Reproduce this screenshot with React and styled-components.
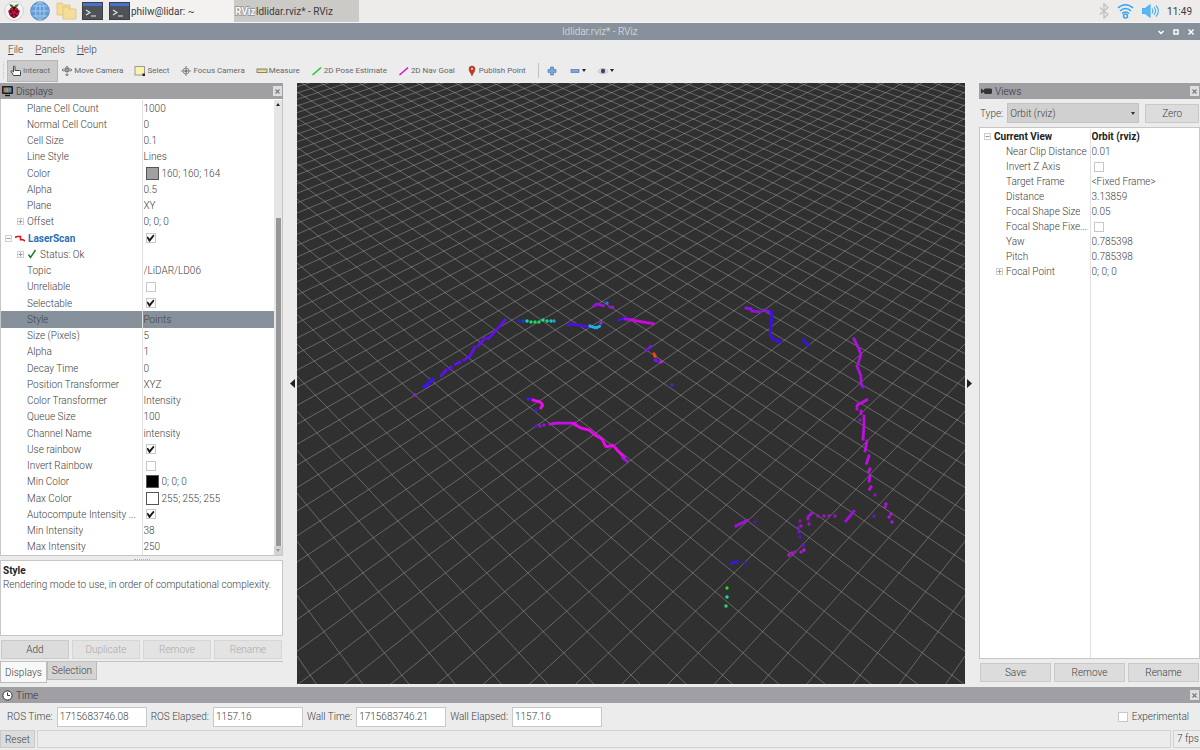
import React, { useState } from 'react';
import styled, { createGlobalStyle } from 'styled-components';

const GlobalStyle = createGlobalStyle`
  * {
    box-sizing: border-box;
  }

  body {
    margin: 0;
    background-color: #ececec;
    color: #404040;
    font-family: Roboto, "Liberation Sans", sans-serif;
    font-size: 10px;
    font-weight: 300;
    line-height: 15px;
  }

  button, input, select {
    font: inherit;
    color: inherit;
  }
`;

const Desktop = styled.div`
  display: flex;
  flex-direction: column;
  height: 100vh;
  overflow: hidden;
`;

/* ---------- desktop panel ---------- */

const Taskbar = styled.header`
  display: flex;
  align-items: center;
  height: 23px;
  padding: 0 8px 0 3px;
  background-color: #edecea;
  border-bottom: 1px solid #f6f6f6;
  font-weight: 400;
  color: #3c3c3c;
`;

const Launchers = styled.div`
  display: flex;
  align-items: center;
  gap: 4px;
  margin-right: 6px;
`;

const LauncherButton = styled.button`
  display: flex;
  align-items: center;
  justify-content: center;
  width: 22px;
  padding: 0;
  border: none;
  background: none;
`;

const TaskButton = styled.button`
  display: flex;
  align-items: center;
  gap: 1px;
  width: 125px;
  height: 22px;
  padding: 0;
  border: none;
  text-align: left;
  background-color: ${({ $active }) => ($active ? '#cbcac7' : '#f3f2f1')};
`;

const Tray = styled.div`
  display: flex;
  align-items: center;
  gap: 8px;
  margin-left: auto;
`;

/* ---------- window chrome ---------- */

const TitleBar = styled.div`
  display: grid;
  grid-template-columns: 1fr auto 1fr;
  align-items: center;
  height: 17px;
  padding: 0 4px;
  background-color: #87919b;
  color: #e2e5e8;
`;

const WindowTitle = styled.h1`
  grid-column: 2;
  margin: 0;
  font-size: 10px;
  font-weight: 300;
`;

const WindowControls = styled.div`
  display: flex;
  justify-content: flex-end;
  gap: 5px;
`;

const WindowButton = styled.button`
  display: flex;
  padding: 0;
  border: none;
  background: none;
`;

const MenuBar = styled.nav`
  display: flex;
  align-items: center;
  gap: 12px;
  height: 18px;
  padding: 0 8px;
`;

const MenuItem = styled.a`
  color: inherit;
  text-decoration: none;
`;

const ToolBar = styled.div`
  display: flex;
  align-items: center;
  height: 25px;
  padding-left: 3px;
  font-size: 8px;
  font-weight: 400;
  color: #666;
`;

const ToolHandle = styled.span`
  width: 4px;
  height: 17px;
  border-left: 1px dotted #c4c4c4;
`;

const ToolButton = styled.button`
  display: flex;
  align-items: center;
  gap: 1px;
  height: 22px;
  padding: 0 7px 0 2px;
  border: 1px solid ${({ $active }) => ($active ? '#b6b6b6' : 'transparent')};
  background-color: ${({ $active }) => ($active ? '#cacaca' : 'transparent')};
  white-space: nowrap;
`;

const ToolDivider = styled.span`
  width: 1px;
  height: 15px;
  margin: 0 4px;
  background-color: #c2c2c2;
`;

/* ---------- docks ---------- */

const Workspace = styled.main`
  display: grid;
  grid-template-columns: 283px 14px minmax(0, 1fr) 14px 221px;
  grid-template-rows: minmax(0, 1fr);
  flex: 1;
  min-height: 0;
`;

const Dock = styled.section`
  display: flex;
  flex-direction: column;
  min-width: 0;
  min-height: 0;
`;

const DockHeader = styled.div`
  display: flex;
  align-items: center;
  gap: 3px;
  flex: none;
  height: 16px;
  padding: 0 1px 0 2px;
  background-color: #9f9fa4;
`;

const DockTitle = styled.h2`
  flex: 1;
  margin: 0;
  font-size: 10px;
  font-weight: 300;
  color: #333;
`;

const CloseButton = styled.button`
  display: flex;
  align-items: center;
  justify-content: center;
  width: 9px;
  height: 10px;
  padding: 0;
  border: none;
  background-color: #dedede;
`;

const CollapseHandle = styled.button`
  display: flex;
  align-items: center;
  justify-content: ${({ $side }) => ($side === 'left' ? 'flex-end' : 'flex-start')};
  padding: 0 2px;
  border: none;
  background: none;
`;

const TreeFrame = styled.div`
  display: flex;
  flex: 1;
  min-height: 0;
  padding-top: 1px;
  border: 1px solid #c6c6c6;
  border-top: ${({ $flush }) => ($flush ? 'none' : '1px solid #c6c6c6')};
  background-color: #fff;
`;

const Tree = styled.table`
  flex: 1;
  width: 100%;
  height: 100%;
  border-collapse: collapse;
  table-layout: fixed;
`;

const TreeRow = styled.tr`
  height: ${({ $height }) => $height};
  background-color: ${({ $selected }) => ($selected ? '#87919b' : 'transparent')};
`;

const NameCell = styled.td`
  width: ${({ $width }) => $width}px;
  padding: 0 0 0 ${({ $indent }) => $indent}px;
  border-right: 1px solid #e0e0e0;
  vertical-align: middle;
`;

const ValueCell = styled.td`
  padding: 0 0 0 1px;
  vertical-align: middle;
`;

const CellLine = styled.div`
  display: flex;
  align-items: center;
  gap: 3px;
  height: 15px;
  font-weight: ${({ $bold }) => ($bold ? 700 : 300)};
  color: ${({ $color }) => $color || 'inherit'};
`;

const CellText = styled.span`
  overflow: hidden;
  white-space: nowrap;
  text-overflow: ellipsis;
`;

const Expander = styled.button`
  display: flex;
  flex: none;
  align-items: center;
  justify-content: center;
  width: 7px;
  height: 7px;
  padding: 0;
  border: 1px solid #cfcfcf;
  background-color: #fbfbfb;
`;

const CheckBox = styled.input`
  appearance: none;
  flex: none;
  width: 10px;
  height: 10px;
  margin: 0 0 0 2px;
  border: 1px solid #c8c8c8;
  background-color: #fff;

  &:checked::after {
    content: "";
    display: block;
    width: 8px;
    height: 8px;
    background-color: #1c1c1c;
    clip-path: polygon(0 40%, 18% 30%, 38% 58%, 85% 4%, 100% 20%, 42% 94%, 32% 94%);
  }
`;

const Swatch = styled.span`
  flex: none;
  width: 13px;
  height: 13px;
  margin-left: 2px;
  border: 1px solid #555;
  background-color: ${({ $color }) => $color};
`;

const ScrollBar = styled.div`
  display: flex;
  flex-direction: column;
  align-items: center;
  flex: none;
  width: 8px;
  background-color: #e6e6e6;
`;

const ScrollTrack = styled.div`
  display: flex;
  flex: 1;
  flex-direction: column;
  justify-content: flex-end;
`;

const ScrollThumb = styled.div`
  width: 5px;
  height: 75%;
  background-color: #979797;
`;

const ScrollArrow = styled.div`
  display: flex;
  align-items: center;
  justify-content: center;
  width: 8px;
  height: 9px;
  background-color: ${({ $end }) => ($end ? '#d4d4d4' : 'transparent')};
`;

const Splitter = styled.div`
  flex: none;
  align-self: center;
  width: 16px;
  height: 4px;
  border-bottom: 1px dotted #b0b0b0;
`;

const HelpBox = styled.div`
  flex: none;
  height: 76px;
  padding: 3px 2px;
  border: 1px solid #c6c6c6;
  background-color: #fff;
  line-height: 14px;
`;

const HelpTitle = styled.h3`
  margin: 0;
  font-size: 10px;
  font-weight: 700;
  color: #222;
`;

const HelpText = styled.p`
  margin: 0;
`;

const ButtonRow = styled.div`
  display: flex;
  flex: none;
  gap: 3px;
  padding: 4px 1px 2px;
`;

const PushButton = styled.button`
  flex: 1;
  height: 19px;
  padding: 0;
  border: 1px solid #cacaca;
  background-color: #dcdcdc;

  &:disabled {
    border-color: #d6d6d6;
    background-color: #e3e3e3;
    color: #aaa;
  }
`;

const TabBar = styled.div`
  display: flex;
  align-items: flex-start;
  flex: none;
  height: 23px;
  border-top: 1px solid #c2c2c2;
`;

const Tab = styled.button`
  height: ${({ $active }) => ($active ? 21 : 18)}px;
  padding: 0 4px;
  border: 1px solid #bcbcbc;
  border-top: none;
  background-color: ${({ $active }) => ($active ? '#f8f8f8' : '#d4d4d4')};
`;

const TypeRow = styled.div`
  display: flex;
  align-items: center;
  flex: none;
  gap: 4px;
  height: 28px;
  padding: 0 1px;
`;

const SelectWrap = styled.div`
  display: flex;
  align-items: center;
  justify-content: flex-end;
  width: 132px;
  height: 20px;
  margin-right: 2px;
  border: 1px solid #c2c2c2;
  background-color: #d0d0d0;
`;

const Select = styled.select`
  appearance: none;
  flex: 1;
  height: 18px;
  padding: 0 2px;
  border: none;
  background: none;
`;

const SelectArrow = styled.svg`
  margin-right: 3px;
`;

const Viewport = styled.svg`
  display: block;
  width: 100%;
  height: 100%;
  background-color: #303030;
`;

/* ---------- bottom ---------- */

const TimePanel = styled.section`
  flex: none;
  margin-top: 3px;
`;

const TimeRow = styled.div`
  display: flex;
  align-items: center;
  gap: 4px;
  height: 27px;
  padding: 0 11px 0 7px;
`;

const TimeLabel = styled.label`
  display: flex;
  align-items: center;
  gap: 4px;
  white-space: nowrap;
`;

const TimeInput = styled.input`
  width: 90px;
  height: 20px;
  padding: 0 2px;
  border: 1px solid #c8c8c8;
  background-color: #fff;
`;

const Experimental = styled.label`
  display: flex;
  align-items: center;
  gap: 4px;
  margin-left: auto;
`;

const StatusBar = styled.footer`
  display: flex;
  align-items: center;
  gap: 2px;
  height: 20px;
  padding-bottom: 2px;
`;

const ResetButton = styled(PushButton)`
  flex: none;
  width: 35px;
  height: 18px;
`;

const StatusMessage = styled.div`
  flex: 1;
  height: 18px;
  border: 1px solid #d2d2d2;
`;

const Fps = styled.div`
  width: 27px;
  height: 18px;
  padding-left: 3px;
  border: 1px solid #d2d2d2;
  border-right: none;
  white-space: nowrap;
`;

/* ---------- icons ---------- */

const RaspberryIcon = () => (
  <svg width="20" height="20" viewBox="0 0 20 20">
    <circle cx="10" cy="10" r="9.4" fill="#f4f4f4" stroke="#c9c9c9" strokeWidth="0.8" />
    <path d="M10 6.4C8 6.600 6 5.800 5.400 3.400 7.600 3 9.400 4 10 6.400zM10 6.400c2 .2 4-.6 4.600-3C12.400 3 10.600 4 10 6.400z" fill="#3f7d2c" />
    <path d="M10 5.800c2.200 0 3.400 1.200 4 2.400 1.400.8 1.800 2.600 1 4-.4 2.200-2.800 4.600-5 5-2.200-.4-4.600-2.800-5-5-.8-1.400-.4-3.200 1-4 .6-1.200 1.800-2.400 4-2.400z" fill="#4a0b1c" />
    <g fill="#c2183f">
      <circle cx="10" cy="11.4" r="1.9" />
      <circle cx="7.8" cy="8.3" r="1.5" />
      <circle cx="12.2" cy="8.3" r="1.5" />
      <circle cx="6.6" cy="12.8" r="1.5" />
      <circle cx="13.4" cy="12.8" r="1.5" />
      <circle cx="10" cy="15.2" r="1.4" />
      <ellipse cx="5.2" cy="10.2" rx="0.7" ry="1.3" />
      <ellipse cx="14.8" cy="10.2" rx="0.7" ry="1.3" />
    </g>
  </svg>
);

const GlobeIcon = () => (
  <svg width="20" height="20" viewBox="0 0 20 20" fill="none" stroke="#b9d6f3" strokeWidth="0.8">
    <circle cx="10" cy="10" r="9.3" fill="#639edb" stroke="#4a7fb8" />
    <ellipse cx="10" cy="10" rx="4.3" ry="9" />
    <path d="M10 1v18M1 10h18M3 5h14M3 15h14" />
  </svg>
);

const FilesIcon = () => (
  <svg width="21" height="18" viewBox="0 0 21 18" fill="#f5dc98" stroke="#dcbd6c" strokeWidth="0.7">
    <path d="M1 1h5l1 2h7v10H1z" />
    <path d="M7 5h5l1 2h7v10H7z" />
  </svg>
);

const TerminalIcon = () => (
  <svg width="21" height="18" viewBox="0 0 21 18">
    <rect x="0.5" y="0.5" width="20" height="17" fill="#4d5357" stroke="#3b3f42" />
    <rect x="1" y="1" width="19" height="3" fill="#4a6fd0" />
    <path d="M4 8l4 2.5L4 13M9 14h5" fill="none" stroke="#e6e6e6" strokeWidth="1.1" />
  </svg>
);

const RvizLogo = () => (
  <svg width="21" height="14" viewBox="0 0 21 14">
    <text
      x="1"
      y="11"
      fontFamily="Roboto, sans-serif"
      fontSize="10"
      fontWeight="700"
      fill="#fafafa"
      stroke="#8f8f8f"
      strokeWidth="1.4"
      paintOrder="stroke"
    >
      RViz
    </text>
  </svg>
);

const BluetoothIcon = () => (
  <svg width="10" height="16" viewBox="0 0 10 16" fill="none" stroke="#c3c3c3" strokeWidth="1.5">
    <path d="M1 4.5l8 7-4 3.5V1l4 3.500-8 7" />
  </svg>
);

const WifiIcon = () => (
  <svg width="17" height="16" viewBox="0 0 17 16" fill="none" stroke="#35a4ef" strokeWidth="1.5">
    <path d="M1 5C5.500.5 11.500.5 16 5M3 8c3.300-3.300 7.700-3.300 11 0M5 10.500c2-2 5-2 7 0" />
    <circle cx="8.5" cy="13" r="2" />
  </svg>
);

const VolumeIcon = () => (
  <svg width="17" height="14" viewBox="0 0 17 14" fill="none" stroke="#4db1f2" strokeWidth="1.2">
    <path d="M.5 4.500h3L8 1v12L3.500 9.500h-3z" fill="#5ab8f5" />
    <path d="M10 4.500c1 1.500 1 3.500 0 5M12 3c2 2.500 2 5.500 0 8M14 1.500c3 3.500 3 7.500 0 11" />
  </svg>
);

const ToolIcon = ({ name }) => (
  <svg width="12" height="12" viewBox="0 0 12 12" fill="none" stroke="#777" strokeWidth="1">
    {name === 'interact' && (
      <path d="M3.500 10.500h7v-4q0-1-1-1H5V2q0-1-.8-1T3.500 2v5L2.200 5.800q-.8-.4-1.200.4z" fill="#fff" stroke="#333" strokeWidth="0.9" />
    )}
    {name === 'move' && (
      <>
        <path d="M6 2v9M1 5h10M4.500 3L6 1l1.500 2M4.500 9L6 11l1.500-2M2.500 3.500L1 5l1.500 1.500M9.500 3.500L11 5 9.500 6.500" strokeWidth="0.9" />
        <rect x="4" y="3.5" width="4" height="3" fill="#999" strokeWidth="0.8" />
      </>
    )}
    {name === 'select' && (
      <>
        <rect x="1" y="1.5" width="9.5" height="8.5" fill="#fbf3a5" stroke="#999" />
        <path d="M8.500 8.500H11V11H8.500z" fill="#222" stroke="none" />
      </>
    )}
    {name === 'focus' && (
      <>
        <path d="M6 1v10M1 6h10" stroke="#888" />
        <circle cx="6" cy="6" r="3" stroke="#888" />
        <circle cx="6" cy="6" r="1" fill="#777" />
      </>
    )}
    {name === 'measure' && (
      <>
        <rect x="1" y="4" width="10" height="3.5" fill="#ede0a4" stroke="#8b8460" />
        <path d="M3 4v1.500M5 4v1.500M7 4v1.500M9 4v1.500" stroke="#8b8460" strokeWidth="0.6" />
      </>
    )}
    {name === 'pose' && <path d="M1.500 10l4-3.500M5 7l5-4.500" stroke="#14d32f" strokeWidth="1.6" />}
    {name === 'goal' && <path d="M1.500 10l4-3.500M5 7l5-4.500" stroke="#dd14cf" strokeWidth="1.6" />}
    {name === 'point' && (
      <>
        <path d="M6 11C5.500 8.500 3 7 3 4a3 3 0 0 1 6 0c0 3-2.500 4.500-3 7z" fill="#c23a1e" stroke="#962a14" strokeWidth="0.5" />
        <circle cx="6" cy="3.8" r="1.1" fill="#f6d9d0" stroke="none" />
      </>
    )}
    {name === 'add' && <path d="M4.500 2h3v2.500H10v3H7.500V10h-3V7.500H2v-3h2.500z" fill="#7ea5d8" stroke="#4d79b5" strokeWidth="0.7" />}
    {name === 'remove' && <rect x="2" y="4.5" width="8" height="3" fill="#7ea5d8" stroke="#4d79b5" strokeWidth="0.7" />}
    {name === 'eye' && (
      <>
        <path d="M1 6.500c2.500-4 7.500-4 10 0-2.500 3-7.500 3-10 0z" fill="#dfe3e8" stroke="#a0a6ad" strokeWidth="0.6" />
        <circle cx="6" cy="6" r="2.2" fill="#3b4658" stroke="none" />
      </>
    )}
  </svg>
);

const DisplaysIcon = () => (
  <svg width="11" height="12" viewBox="0 0 11 12">
    <rect x="0" y="1" width="11" height="8" rx="1" fill="#1d1d1d" />
    <path d="M1.500 2.500h3v5h-3z" fill="#d9695f" />
    <path d="M4.200 2.500h2.600v5H4.200z" fill="#6fbf74" />
    <path d="M6.700 2.500h2.800v5H6.700z" fill="#6b7fd6" />
    <path d="M3 10.500h5" stroke="#1d1d1d" strokeWidth="1.4" />
  </svg>
);

const CameraIcon = () => (
  <svg width="11" height="8" viewBox="0 0 11 8" fill="#333">
    <path d="M0 1.500l3 2v-1l1-1h6l1 1V6l-1 1H4L3 6V5L0 6.500z" />
  </svg>
);

const ClockIcon = () => (
  <svg width="11" height="11" viewBox="0 0 11 11">
    <circle cx="5.5" cy="5.5" r="4.6" fill="#fff" stroke="#333" />
    <path d="M5.500 2.500v3H8" fill="none" stroke="#333" />
  </svg>
);

const LaserIcon = () => (
  <svg width="10" height="8" viewBox="0 0 10 8" fill="none" stroke="#d8151b" strokeWidth="1.6">
    <path d="M0 3.500l2-1h3.500v3.200H8L10 7" />
  </svg>
);

const OkIcon = () => (
  <svg width="10" height="10" viewBox="0 0 10 10" fill="none" stroke="#157a1f" strokeWidth="1.4">
    <path d="M1.500 5.500l2 3L8.500 1" />
  </svg>
);

const CloseIcon = () => (
  <svg width="5" height="5" viewBox="0 0 5 5" stroke="#777" strokeWidth="1.1">
    <path d="M.5.5l4 4M4.500.5l-4 4" />
  </svg>
);

const Arrow = ({ d, width, height, color = '#222' }) => (
  <svg width={width} height={height} viewBox={`0 0 ${width} ${height}`} fill={color}>
    <path d={d} />
  </svg>
);

/* ---------- 3D view ---------- */

// Orbit camera: 45 degree pitch, 45 degree yaw, focal point on the origin
const VIEW_WIDTH = 668;
const VIEW_HEIGHT = 601;
const FOCAL = VIEW_HEIGHT / 2 / Math.tan(Math.PI / 8);
const DISTANCE = 3.13859;
const CELL = 0.1 * Math.SQRT2;

function project(forward, right) {
  const along = forward * Math.SQRT1_2;
  const depth = DISTANCE + along;
  const x = VIEW_WIDTH / 2 + (FOCAL * right) / depth;
  const y = VIEW_HEIGHT / 2 - (FOCAL * along) / depth;
  return `${x.toFixed(1)} ${y.toFixed(1)}`;
}

function gridPath() {
  const near = -1.4;
  const far = 3.3;
  let d = '';
  for (let k = -30; k <= 44; k++) {
    const c = k * CELL;
    d += `M${project(near, near - c)}L${project(far, far - c)}`;
    d += `M${project(near, c - near)}L${project(far, c - far)}`;
  }
  return d;
}

const scanLines = [
  ['#5f10ec', 'M208 237l-6 7-11 12M188 255l-7 8M178 264l-5 9-6 4M163 279l-6 3M154 284l-3 4M149 287l-6 7M136 297l-3 2M131 302l-4 3'],
  ['#3a14ee', 'M136 296l-8 7M127 304l-2 1'],
  ['#4b12d8', 'M271 242l4-1 12 2 6 1M322 237l6-2 5 1'],
  ['#18b4f0', 'M293 243l6 2 4-2'],
  ['#9a12dc', 'M297 223l3-2 8 2M313 224h5M328 236l8 1'],
  ['#c80ad8', 'M334 237l12 2 12 2'],
  ['#8d14dc', 'M449 225l5 1M455 228l8 1M467 227l6 2'],
  ['#3c10e6', 'M474 228l1 5-1 8-1 11 4 5 8 2M506 257l6 6'],
  ['#7a14e0', 'M350 267l4-4M358 277l4 2'],
  ['#b30ee0', 'M557 256l4 8 3 7-3 10M560 283l4 10 0 8 2 3'],
  ['#c20ee4', 'M560 326v-4l8-4 3-2M564 328v4M567 333v6M567 341l-1 16M570 358l-2 10M572 373l-3 9M573 386l-2 4M573 393l-1 6M574 404l-2 3'],
  ['#f00cec', 'M236 317l7 2 3 3-3 4'],
  ['#4a14f0', 'M231 316h3M239 327l-2 1'],
  ['#c80ee8', 'M253 341l9-1h17'],
  ['#ec08ee', 'M277 341l7 4 8 2 6 5 7 4 4 8 7-2 5 6 7 7'],
  ['#a812ee', 'M326 375l5 4'],
  ['#a012d6', 'M439 443l12-6M511 434l4-4M549 438l8-10'],
  ['#3d14e6', 'M435 480l7-2M448 480h1'],
];

// x, y, colour of the single returns
const scanPoints = [
  [222, 238, '#2a20d8'], [226, 238, '#2038e0'], [230, 238, '#18d8b0'], [234, 239, '#14e070'],
  [238, 239, '#20d850'], [242, 239, '#1cd860'], [246, 237, '#1cd8a0'], [250, 238, '#18d880'],
  [254, 238, '#18c8c0'], [257, 238, '#18a0e0'], [310, 220, '#2a70f0'], [304, 240, '#9030e0'],
  [357, 271, '#f03c10'], [358, 273, '#f05010'], [359, 277, '#5a20f0'], [364, 279, '#d814ec'],
  [375, 302, '#5a1cc8'], [118, 312, '#a814d8'], [239, 343, '#5a18c0'], [243, 343, '#9a14d8'],
  [247, 342, '#9a14d8'], [566, 304, '#7a14e0'], [563, 337, '#8a14c8'],
  [578, 412, '#8a14c0'], [589, 421, '#b414d8'], [588, 424, '#b414d8'], [594, 431, '#b414d8'],
  [592, 434, '#b414d8'], [595, 439, '#b414d8'], [577, 433, '#6a14d8'], [521, 433, '#a014c0'],
  [527, 433, '#a014c0'], [532, 433, '#a014c0'], [538, 433, '#a014c0'], [511, 436, '#a014c0'],
  [512, 441, '#a014c0'], [503, 438, '#8a14b0'], [504, 443, '#a014c0'], [501, 445, '#8a14c0'],
  [502, 449, '#6a14d0'], [503, 454, '#4a14e8'], [506, 462, '#6a14d8'], [507, 467, '#c814d8'],
  [504, 469, '#b014d8'], [498, 469, '#a014c0'], [495, 470, '#b014d8'], [492, 472, '#c014d8'],
  [458, 439, '#5a14a8'], [430, 505, '#22dc22'], [430, 514, '#22d8a0'], [429, 523, '#22dc70'],
];

const LidarView = () => (
  <Viewport viewBox={`0 0 ${VIEW_WIDTH} ${VIEW_HEIGHT}`} preserveAspectRatio="xMidYMid slice">
    <path d={gridPath()} fill="none" stroke="#a0a0a4" strokeOpacity="0.5" strokeWidth="1" />
    {scanLines.map(([color, d]) => (
      <path
        key={d}
        d={d}
        fill="none"
        stroke={color}
        strokeWidth="3.2"
        strokeDasharray="0.1 2.4"
        strokeLinecap="round"
      />
    ))}
    {scanPoints.map(([x, y, color]) => (
      <circle key={`${x}-${y}`} cx={x} cy={y} r="1.7" fill={color} />
    ))}
  </Viewport>
);

/* ---------- property tree ---------- */

const displayRows = [
  { name: 'Plane Cell Count', value: '1000' },
  { name: 'Normal Cell Count', value: '0' },
  { name: 'Cell Size', value: '0.1' },
  { name: 'Line Style', value: 'Lines' },
  { name: 'Color', value: '160; 160; 164', swatch: '#a0a0a4' },
  { name: 'Alpha', value: '0.5' },
  { name: 'Plane', value: 'XY' },
  { name: 'Offset', value: '0; 0; 0', expander: '+', indent: 16 },
  { name: 'LaserScan', check: true, expander: '-', indent: 4, icon: <LaserIcon />, bold: true, color: '#2a6fb8' },
  { name: 'Status: Ok', expander: '+', indent: 16, icon: <OkIcon /> },
  { name: 'Topic', value: '/LiDAR/LD06' },
  { name: 'Unreliable', check: false },
  { name: 'Selectable', check: true },
  { name: 'Style', value: 'Points', selected: true },
  { name: 'Size (Pixels)', value: '5' },
  { name: 'Alpha', value: '1' },
  { name: 'Decay Time', value: '0' },
  { name: 'Position Transformer', value: 'XYZ' },
  { name: 'Color Transformer', value: 'Intensity' },
  { name: 'Queue Size', value: '100' },
  { name: 'Channel Name', value: 'intensity' },
  { name: 'Use rainbow', check: true },
  { name: 'Invert Rainbow', check: false },
  { name: 'Min Color', value: '0; 0; 0', swatch: '#000' },
  { name: 'Max Color', value: '255; 255; 255', swatch: '#fff' },
  { name: 'Autocompute Intensity ...', check: true },
  { name: 'Min Intensity', value: '38' },
  { name: 'Max Intensity', value: '250' },
];

const viewRows = [
  { name: 'Current View', value: 'Orbit (rviz)', expander: '-', indent: 4, bold: true, color: '#222' },
  { name: 'Near Clip Distance', value: '0.01' },
  { name: 'Invert Z Axis', check: false },
  { name: 'Target Frame', value: '<Fixed Frame>' },
  { name: 'Distance', value: '3.13859' },
  { name: 'Focal Shape Size', value: '0.05' },
  { name: 'Focal Shape Fixe...', check: false },
  { name: 'Yaw', value: '0.785398' },
  { name: 'Pitch', value: '0.785398' },
  { name: 'Focal Point', value: '0; 0; 0', expander: '+', indent: 16 },
];

const PropertyTree = ({ rows, nameWidth, rowHeight, filler }) => (
  <Tree>
    <tbody>
      {rows.map((row, i) => (
        <TreeRow key={i} $selected={row.selected} $height={rowHeight}>
          <NameCell $width={nameWidth} $indent={row.indent || 26}>
            <CellLine $bold={row.bold} $color={row.color}>
              {row.expander && (
                <Expander aria-label={`Toggle ${row.name}`}>
                  <svg width="5" height="5" viewBox="0 0 5 5" stroke="#999">
                    <path d={row.expander === '+' ? 'M.5 2.500h4M2.500.5v4' : 'M.5 2.500h4'} />
                  </svg>
                </Expander>
              )}
              {row.icon}
              <CellText>{row.name}</CellText>
            </CellLine>
          </NameCell>
          <ValueCell>
            <CellLine $bold={row.bold} $color={row.bold ? row.color : undefined}>
              {row.check !== undefined && (
                <CheckBox type="checkbox" defaultChecked={row.check} aria-label={row.name} />
              )}
              {row.swatch && <Swatch $color={row.swatch} />}
              {row.value && <CellText>{row.value}</CellText>}
            </CellLine>
          </ValueCell>
        </TreeRow>
      ))}
      {filler && (
        <TreeRow $height="auto">
          <NameCell $indent={0} />
          <ValueCell />
        </TreeRow>
      )}
    </tbody>
  </Tree>
);

const tools = [
  ['interact', 'Interact'],
  ['move', 'Move Camera'],
  ['select', 'Select'],
  ['focus', 'Focus Camera'],
  ['measure', 'Measure'],
  ['pose', '2D Pose Estimate'],
  ['goal', '2D Nav Goal'],
  ['point', 'Publish Point'],
];

const clocks = [
  ['ROS Time:', '1715683746.08'],
  ['ROS Elapsed:', '1157.16'],
  ['Wall Time:', '1715683746.21'],
  ['Wall Elapsed:', '1157.16'],
];

const windowButtons = [
  ['Minimize', 'M2.500 3L5 5.500 7.500 3'],
  ['Maximize', 'M3 2h4v4H3z'],
  ['Close', 'M2.500 1.500l5 5M7.500 1.500l-5 5'],
];

const App = () => {
  const [tool, setTool] = useState('interact');
  const [tab, setTab] = useState('Displays');

  return (
    <Desktop>
      <GlobalStyle />
      <Taskbar>
        <Launchers>
          <LauncherButton aria-label="Menu"><RaspberryIcon /></LauncherButton>
          <LauncherButton aria-label="Web browser"><GlobeIcon /></LauncherButton>
          <LauncherButton aria-label="File manager"><FilesIcon /></LauncherButton>
          <LauncherButton aria-label="Terminal"><TerminalIcon /></LauncherButton>
        </Launchers>
        <TaskButton>
          <TerminalIcon />
          philw@lidar: ~
        </TaskButton>
        <TaskButton $active>
          <RvizLogo />
          ldlidar.rviz* - RViz
        </TaskButton>
        <Tray>
          <BluetoothIcon />
          <WifiIcon />
          <VolumeIcon />
          <span>11:49</span>
        </Tray>
      </Taskbar>

      <TitleBar>
        <WindowTitle>ldlidar.rviz* - RViz</WindowTitle>
        <WindowControls>
          {windowButtons.map(([label, d]) => (
            <WindowButton key={label} aria-label={label}>
              <svg width="10" height="8" viewBox="0 0 10 8" fill="none" stroke="#fff" strokeWidth="1.5">
                <path d={d} />
              </svg>
            </WindowButton>
          ))}
        </WindowControls>
      </TitleBar>

      <MenuBar>
        <MenuItem href="#file"><u>F</u>ile</MenuItem>
        <MenuItem href="#panels"><u>P</u>anels</MenuItem>
        <MenuItem href="#help"><u>H</u>elp</MenuItem>
      </MenuBar>

      <ToolBar>
        <ToolHandle />
        {tools.map(([id, label]) => (
          <ToolButton key={id} $active={tool === id} onClick={() => setTool(id)}>
            <ToolIcon name={id} />
            {label}
          </ToolButton>
        ))}
        <ToolDivider />
        <ToolButton aria-label="Add tool"><ToolIcon name="add" /></ToolButton>
        <ToolButton aria-label="Remove tool">
          <ToolIcon name="remove" />
          <Arrow width={4} height={3} d="M0 0h4L2 3z" />
        </ToolButton>
        <ToolButton aria-label="Toolbar visibility">
          <ToolIcon name="eye" />
          <Arrow width={4} height={3} d="M0 0h4L2 3z" />
        </ToolButton>
      </ToolBar>

      <Workspace>
        <Dock>
          <DockHeader>
            <DisplaysIcon />
            <DockTitle>Displays</DockTitle>
            <CloseButton aria-label="Close Displays"><CloseIcon /></CloseButton>
          </DockHeader>
          <TreeFrame $flush>
            <PropertyTree rows={displayRows} nameWidth={141} rowHeight="auto" />
            <ScrollBar>
              <ScrollArrow><Arrow width={4} height={3} d="M0 3h4L2 0z" /></ScrollArrow>
              <ScrollTrack><ScrollThumb /></ScrollTrack>
              <ScrollArrow $end><Arrow width={4} height={3} d="M0 0h4L2 3z" color="#999" /></ScrollArrow>
            </ScrollBar>
          </TreeFrame>
          <Splitter />
          <HelpBox>
            <HelpTitle>Style</HelpTitle>
            <HelpText>Rendering mode to use, in order of computational complexity.</HelpText>
          </HelpBox>
          <ButtonRow>
            <PushButton>Add</PushButton>
            <PushButton disabled>Duplicate</PushButton>
            <PushButton disabled>Remove</PushButton>
            <PushButton disabled>Rename</PushButton>
          </ButtonRow>
          <TabBar>
            {['Displays', 'Selection'].map((name) => (
              <Tab key={name} $active={tab === name} onClick={() => setTab(name)}>{name}</Tab>
            ))}
          </TabBar>
        </Dock>

        <CollapseHandle $side="left" aria-label="Collapse left dock">
          <Arrow width={5} height={9} d="M5 0v9L0 4.500z" />
        </CollapseHandle>
        <LidarView />
        <CollapseHandle $side="right" aria-label="Collapse right dock">
          <Arrow width={5} height={9} d="M0 0v9l5-4.500z" />
        </CollapseHandle>

        <Dock>
          <DockHeader>
            <CameraIcon />
            <DockTitle>Views</DockTitle>
            <CloseButton aria-label="Close Views"><CloseIcon /></CloseButton>
          </DockHeader>
          <TypeRow>
            <label htmlFor="view-type">Type:</label>
            <SelectWrap>
              <Select id="view-type" defaultValue="orbit">
                <option value="orbit">Orbit (rviz)</option>
              </Select>
              <SelectArrow width="4" height="3" viewBox="0 0 4 3" fill="#333">
                <path d="M0 0h4L2 3z" />
              </SelectArrow>
            </SelectWrap>
            <PushButton>Zero</PushButton>
          </TypeRow>
          <TreeFrame>
            <PropertyTree rows={viewRows} nameWidth={110} rowHeight="15px" filler />
          </TreeFrame>
          <ButtonRow>
            <PushButton>Save</PushButton>
            <PushButton>Remove</PushButton>
            <PushButton>Rename</PushButton>
          </ButtonRow>
        </Dock>
      </Workspace>

      <TimePanel>
        <DockHeader>
          <ClockIcon />
          <DockTitle>Time</DockTitle>
          <CloseButton aria-label="Close Time"><CloseIcon /></CloseButton>
        </DockHeader>
        <TimeRow>
          {clocks.map(([label, value]) => (
            <TimeLabel key={label}>
              {label}
              <TimeInput defaultValue={value} readOnly />
            </TimeLabel>
          ))}
          <Experimental>
            <CheckBox type="checkbox" />
            Experimental
          </Experimental>
        </TimeRow>
      </TimePanel>

      <StatusBar>
        <ResetButton>Reset</ResetButton>
        <StatusMessage />
        <Fps>7 fps</Fps>
      </StatusBar>
    </Desktop>
  );
};

export default App;
